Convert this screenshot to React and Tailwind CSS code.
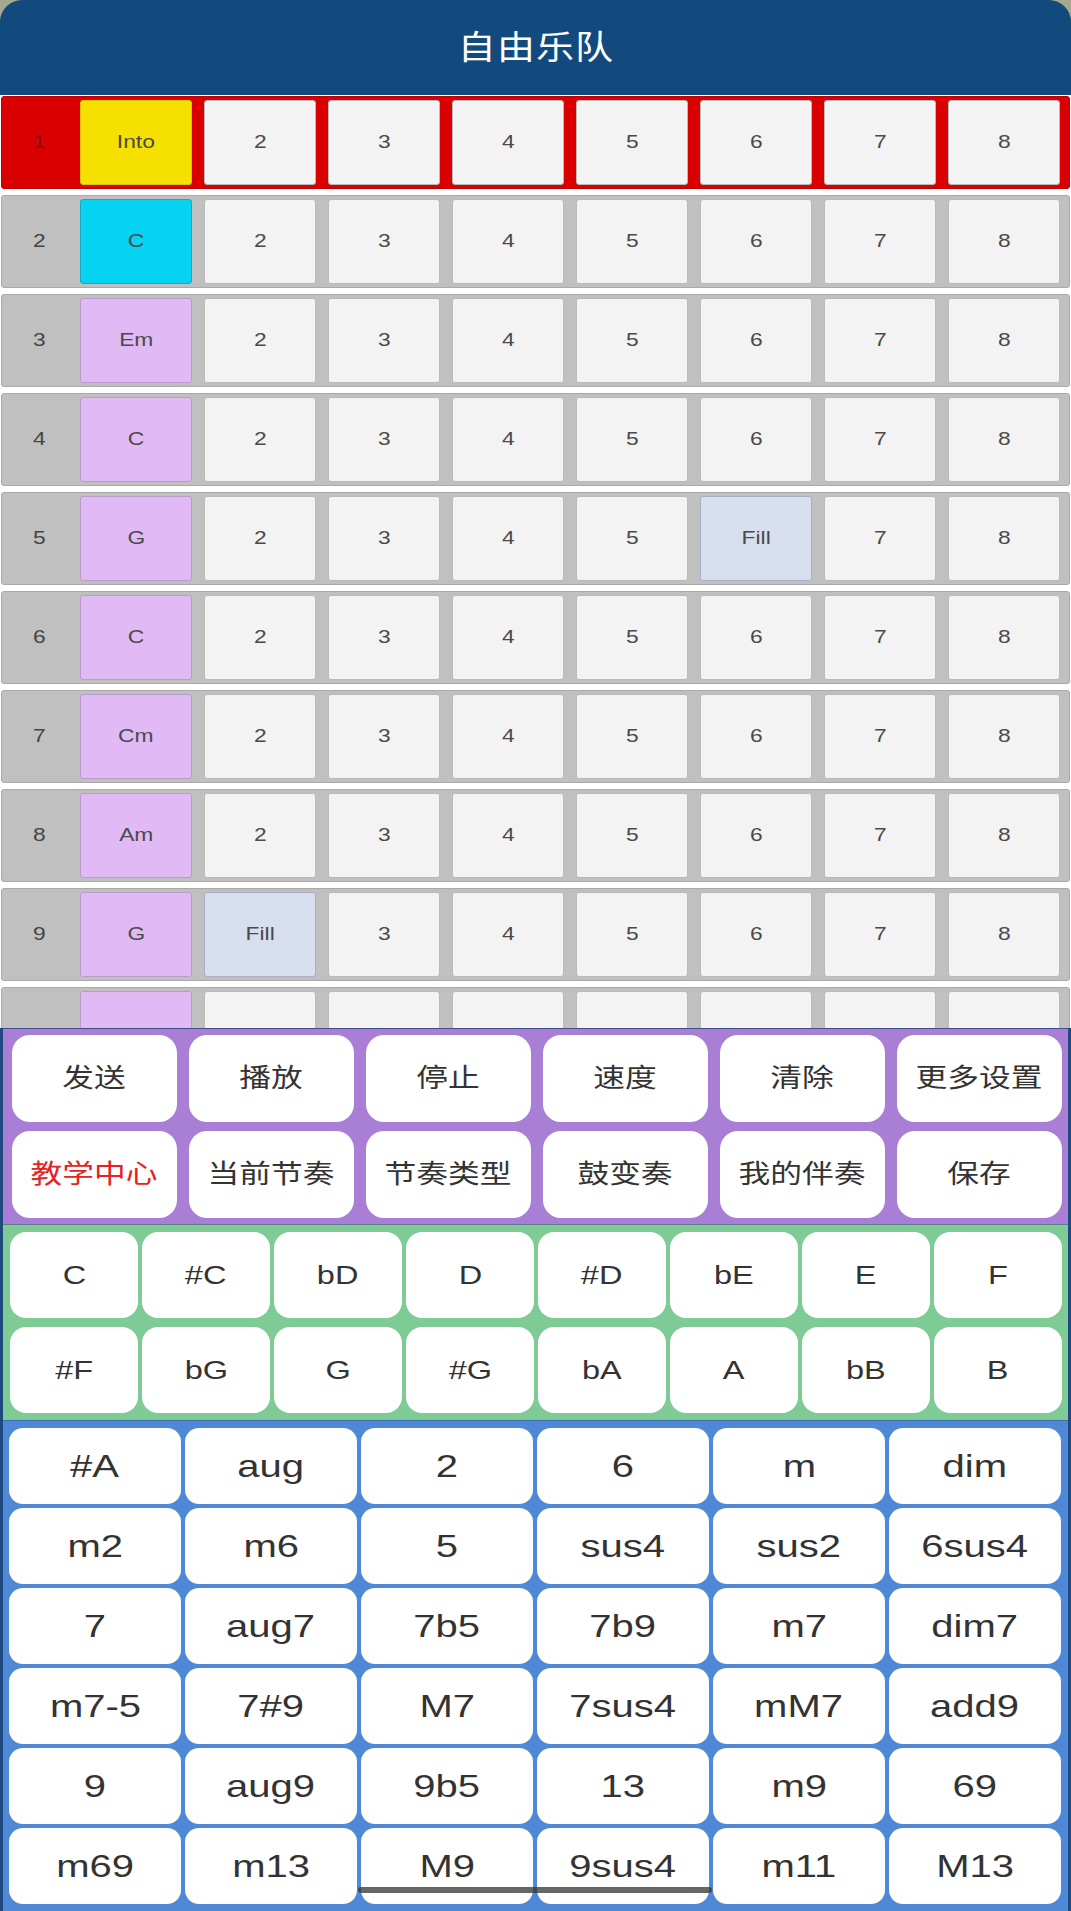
import React from 'react';

const font = { fontFamily: '"Liberation Sans", "Noto Sans CJK SC", Arial, sans-serif' };

const rows = [
    { n: 1, first: 'Into', kind: 'intro', active: true },
    { n: 2, first: 'C', kind: 'current' },
    { n: 3, first: 'Em' },
    { n: 4, first: 'C' },
    { n: 5, first: 'G', fill: 6 },
    { n: 6, first: 'C' },
    { n: 7, first: 'Cm' },
    { n: 8, first: 'Am' },
    { n: 9, first: 'G', fill: 2 },
    // last bar is scrolled under the control panel, labels not visible
    { n: 10, first: '', hidden: true },
];

const controls = ['发送', '播放', '停止', '速度', '清除', '更多设置', '教学中心', '当前节奏', '节奏类型', '鼓变奏', '我的伴奏', '保存'];
const roots = ['C', '#C', 'bD', 'D', '#D', 'bE', 'E', 'F', '#F', 'bG', 'G', '#G', 'bA', 'A', 'bB', 'B'];
const chords = [
    '#A', 'aug', '2', '6', 'm', 'dim',
    'm2', 'm6', '5', 'sus4', 'sus2', '6sus4',
    '7', 'aug7', '7b5', '7b9', 'm7', 'dim7',
    'm7-5', '7#9', 'M7', '7sus4', 'mM7', 'add9',
    '9', 'aug9', '9b5', '13', 'm9', '69',
    'm69', 'm13', 'M9', '9sus4', 'm11', 'M13',
];

const Cell = ({ label, tone }) => {
    const tones = {
        intro: 'bg-[#f6e000] border-[#d8c400]',
        current: 'bg-[#06d2f2] border-[#1aa8c4]',
        chord: 'bg-[#e0b9f5] border-[#b99ccc]',
        fill: 'bg-[#d7def0] border-[#a9b0c4]',
        beat: 'bg-[#f3f3f3] border-[#b9b9b9]',
    };
    return (
        <div className={`w-[112px] h-[85px] shrink-0 rounded-[3px] border flex items-center justify-center text-[19px] text-[#4a4a4a] ${tones[tone]}`}>
            {label !== '' && <span className="inline-block scale-x-[1.2]">{label}</span>}
        </div>
    );
};

const BarRow = ({ row }) => {
    const firstTone = row.kind || 'chord';
    return (
        <div
            className={`mx-px mb-[6px] h-[93px] flex items-center gap-[12px] rounded-[3px] border ${
                row.active ? 'bg-[#d80000] border-[#c00000]' : 'bg-[#c0c0c0] border-[#a9a9a9]'
            }`}
        >
            <div className={`w-[66px] pl-[8px] shrink-0 text-center text-[19px] ${row.active ? 'text-[#8a0c0c]' : 'text-[#454545]'}`}>
                {!row.hidden && <span className="inline-block scale-x-[1.2]">{row.n}</span>}
            </div>
            <Cell label={row.first} tone={firstTone} />
            {[2, 3, 4, 5, 6, 7, 8].map((b) =>
                row.fill === b ? (
                    <Cell key={b} label="Fill" tone="fill" />
                ) : (
                    <Cell key={b} label={row.hidden ? '' : b} tone="beat" />
                )
            )}
        </div>
    );
};

export default function App() {
    return (
        <div className="relative w-[1071px] h-[1911px] overflow-hidden bg-white" style={font}>
            <div className="bg-[#a4a98f]">
                <header className="h-[95px] bg-[#134a7e] rounded-t-[22px] flex items-center justify-center">
                    <h1 className="text-[33px] text-white tracking-[1px]">
                        <span className="inline-block scale-x-[1.15]">自由乐队</span>
                    </h1>
                </header>
            </div>

            <div className="h-[933px] overflow-hidden pt-px">
                {rows.map((row) => (
                    <BarRow key={row.n} row={row} />
                ))}
            </div>

            <div className="border-x-[3px] border-[#1f4a80]">
                <div className="h-[196px] bg-[#a87fd5] border-t border-[#3c4f8a] pt-[6px] pl-[9px] grid grid-cols-[repeat(6,165px)] gap-x-[12px] gap-y-[9px] content-start">
                    {controls.map((c) => (
                        <button
                            key={c}
                            className={`h-[87px] rounded-[18px] bg-white text-[26px] ${c === '教学中心' ? 'text-[#e52222]' : 'text-[#333]'}`}
                        >
                            <span className="inline-block scale-x-[1.22]">{c}</span>
                        </button>
                    ))}
                </div>

                <div className="h-[196px] bg-[#7fcb95] border-t border-[#5d7f8a] pt-[7px] pl-[7px] grid grid-cols-[repeat(8,128px)] gap-x-[4px] gap-y-[9px] content-start">
                    {roots.map((r) => (
                        <button key={r} className="h-[86px] rounded-[16px] bg-white text-[26px] text-[#333]">
                            <span className="inline-block scale-x-[1.25]">{r}</span>
                        </button>
                    ))}
                </div>

                <div className="h-[491px] bg-[#4f88d6] border-t border-[#3f6fae] pt-[7px] pl-[6px] grid grid-cols-[repeat(6,172px)] gap-x-[4px] gap-y-[4px] content-start">
                    {chords.map((c) => (
                        <button key={c} className="h-[76px] rounded-[14px] bg-white text-[32px] text-[#333]">
                            <span className="inline-block scale-x-[1.25]">{c}</span>
                        </button>
                    ))}
                </div>
            </div>

            <div className="absolute left-[358px] top-[1887px] w-[354px] h-[6px] rounded-full bg-[#333]/75" />
        </div>
    );
}
